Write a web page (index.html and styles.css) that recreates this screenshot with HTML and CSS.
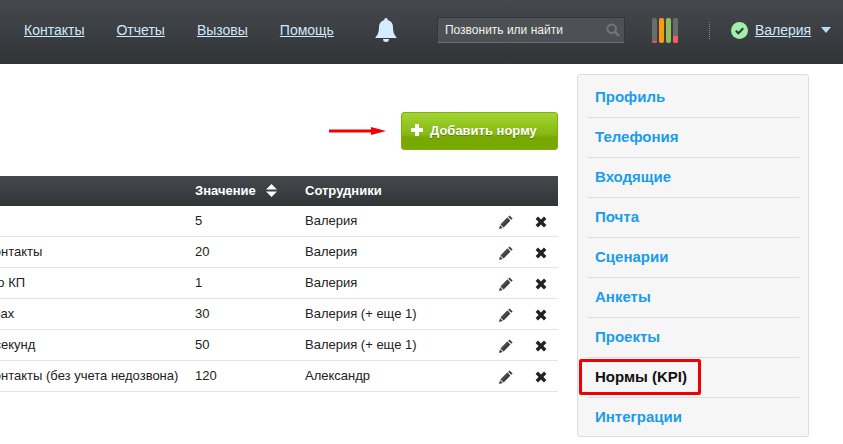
FILE: index.html
```html
<!DOCTYPE html>
<html lang="ru">
<head>
<meta charset="utf-8">
<title>Нормы (KPI)</title>
<link rel="stylesheet" href="styles.css">
</head>
<body>
<svg class="defs" width="0" height="0" aria-hidden="true">
  <symbol id="pencil" viewBox="0 0 14 14"><path d="M10.600.4 13.600 3.400 12.200 4.800 9.200 1.800ZM8.400 2.600 11.400 5.600 4.600 12.400 1.600 9.400ZM1 10.200 3.800 13 0 14Z" fill="#2f3f52"/><path d="M8.400 2.600 9.900 4.100 3.100 10.900 1.600 9.400Z" fill="#5a4a34"/></symbol>
  <symbol id="cross" viewBox="0 0 12 12"><path d="M3 .6 6 3.600 9 .6 11.400 3 8.400 6 11.400 9 9 11.400 6 8.400 3 11.400.6 9 3.600 6 .6 3Z" fill="#222"/></symbol>
</svg>
<header class="topbar">
  <nav class="nav">
    <a href="#">Контакты</a>
    <a href="#">Отчеты</a>
    <a href="#">Вызовы</a>
    <a href="#">Помощь</a>
  </nav>
  <svg class="bell" viewBox="0 0 22 24" aria-hidden="true"><path d="M11 0a1.700 1.700 0 0 1 1.700 1.900C16 2.700 18 5.300 18 9c0 6 1.500 8 4 11H0c2.500-3 4-5 4-11 0-3.700 2-6.300 5.300-7.100A1.700 1.700 0 0 1 11 0ZM8 21h6a3 3 0 0 1-6 0Z" fill="#d3ecff"/></svg>
  <div class="search">
    <span>Позвонить или найти</span>
    <svg viewBox="0 0 14 14" aria-hidden="true"><circle cx="5.700" cy="5.700" r="4.300" fill="none" stroke="#74767a" stroke-width="2"/><path d="M9 9l4 4" stroke="#74767a" stroke-width="2.400"/></svg>
  </div>
  <div class="meters">
    <i class="meter"><b class="fill-low"></b></i>
    <i class="meter"><b class="fill-orange"></b></i>
    <i class="meter"><b class="fill-green"></b></i>
    <i class="meter"><b class="fill-mid"></b></i>
  </div>
  <div class="dots"></div>
  <div class="user">
    <svg class="status" viewBox="0 0 17 17" aria-hidden="true"><circle cx="8.500" cy="8.500" r="8.500" fill="#a2efab"/><path d="M4.800 8.800 7.400 11.300 12.200 6.300" fill="none" stroke="#2f3a36" stroke-width="2"/></svg>
    <a href="#">Валерия</a>
    <span class="caret"></span>
  </div>
</header>
<div class="page">
  <main class="content">
    <div class="toolbar">
      <svg class="arrow" viewBox="0 0 57 8" aria-hidden="true"><path d="M0 2.500h42V0l15 4-15 4V5.500H0Z" fill="#f00000"/></svg>
      <a class="add" href="#"><svg viewBox="0 0 14 14" aria-hidden="true"><path d="M5 1h4v4h4v4H9v4H5V9H1V5h4Z" fill="#fff"/></svg>Добавить норму</a>
    </div>
    <table class="grid">
      <colgroup><col class="c-name"><col class="c-val"><col class="c-staff"><col class="c-edit"><col class="c-del"></colgroup>
      <thead>
        <tr><th>Название</th><th>Значение<svg class="sort" viewBox="0 0 11 13" aria-hidden="true"><path d="M5.500 0 11 5.500H0ZM0 7.500H11L5.500 13Z" fill="#fff"/></svg></th><th>Сотрудники</th><th></th><th></th></tr>
      </thead>
      <tbody>
        <tr><td>Новые лиды</td><td>5</td><td>Валерия</td><td><svg class="ico"><use href="#pencil"/></svg></td><td><svg class="ico x"><use href="#cross"/></svg></td></tr>
        <tr><td>Обработанные контакты</td><td>20</td><td>Валерия</td><td><svg class="ico"><use href="#pencil"/></svg></td><td><svg class="ico x"><use href="#cross"/></svg></td></tr>
        <tr><td>Отправлено ТЗ по КП</td><td>1</td><td>Валерия</td><td><svg class="ico"><use href="#pencil"/></svg></td><td><svg class="ico x"><use href="#cross"/></svg></td></tr>
        <tr><td>Время в разговорах</td><td>30</td><td>Валерия (+ еще 1)</td><td><svg class="ico"><use href="#pencil"/></svg></td><td><svg class="ico x"><use href="#cross"/></svg></td></tr>
        <tr><td>Звонки свыше 5 секунд</td><td>50</td><td>Валерия (+ еще 1)</td><td><svg class="ico"><use href="#pencil"/></svg></td><td><svg class="ico x"><use href="#cross"/></svg></td></tr>
        <tr><td>Обработанные контакты (без учета недозвона)</td><td>120</td><td>Александр</td><td><svg class="ico"><use href="#pencil"/></svg></td><td><svg class="ico x"><use href="#cross"/></svg></td></tr>
      </tbody>
    </table>
  </main>
  <aside class="side">
    <a href="#">Профиль</a>
    <a href="#">Телефония</a>
    <a href="#">Входящие</a>
    <a href="#">Почта</a>
    <a href="#">Сценарии</a>
    <a href="#">Анкеты</a>
    <a href="#">Проекты</a>
    <a href="#" class="current">Нормы (KPI)</a>
    <a href="#">Интеграции</a>
    <div class="mark"></div>
  </aside>
</div>
</body>
</html>
```
FILE: styles.css
```css
* { box-sizing: border-box; }
html, body { margin: 0; height: 100%; overflow: hidden; background: #fff; }
body { font-family: "Liberation Sans", Arial, sans-serif; font-size: 13px; color: #222; }
.defs { display: block; height: 0; }

.topbar { height: 64px; padding: 0 11px 4px 24px; display: flex; align-items: center; background: linear-gradient(#45494d, #313437); }
.nav { display: flex; gap: 32px; }
.topbar a { color: #cde9ff; font-size: 14px; text-decoration: underline; }
.bell { width: 22px; height: 24px; margin-left: 41px; }
.search { width: 188px; height: 26px; margin-left: 40px; padding: 0 4px 0 7px; display: flex; align-items: center; justify-content: space-between; background: #4d5155; border: 1px solid #33363a; border-bottom-color: #6a6d70; color: #f3f3ea; font-size: 12px; }
.search svg { width: 14px; height: 14px; }
.meters { display: flex; gap: 2px; margin-left: 27px; }
.meter { width: 5px; height: 25px; border-radius: 2px; background: #6c6c6c; display: flex; align-items: flex-end; overflow: hidden; }
.meter b { display: block; width: 100%; }
.fill-low { height: 2px; background: #f45050; }
.fill-orange { height: 100%; background: #f89c0e; }
.fill-green { height: 100%; background: #8fbe5a; }
.fill-mid { height: 7px; background: #f75c64; }
.dots { height: 17px; margin-left: 31px; border-left: 1px dotted #8a8d90; }
.user { margin-left: 21px; display: flex; align-items: center; }
.status { width: 17px; height: 17px; margin-right: 7px; }
.caret { width: 0; height: 0; margin-left: 10px; border: 5.5px solid transparent; border-top: 6px solid #b7def8; border-bottom: 0; }

.page { display: flex; align-items: flex-start; gap: 19px; padding-top: 10px; }
.content { width: 558px; flex: none; }
.toolbar { height: 38px; margin-top: 38px; display: flex; justify-content: flex-end; align-items: center; gap: 15px; }
.arrow { width: 57px; height: 8px; }
.add { width: 157px; height: 38px; padding: 0 0 2px 8px; display: flex; align-items: center; gap: 6px; border-radius: 3px; border: 1px solid #7fb012; background: linear-gradient(#a3d435, #86b910 60%, #77a900 68%); color: #fff; font-size: 13px; font-weight: bold; text-decoration: none; text-shadow: 0 1px 1px rgba(60, 80, 0, .6); }
.add svg { width: 14px; height: 14px; }

.grid { width: 664px; margin: 26px 0 0 -106px; table-layout: fixed; border-collapse: separate; border-spacing: 0; }
.c-name { width: 301px; }
.c-val { width: 110px; }
.c-staff { width: 185px; }
.c-edit { width: 36px; }
.c-del { width: 32px; }
.grid th { height: 30px; padding: 0 0 1px; text-align: left; color: #fff; font-weight: bold; background: linear-gradient(#45494d, #313437); white-space: nowrap; }
.grid td { height: 31px; padding: 0 0 2px; border-bottom: 1px solid #e3e3e3; white-space: nowrap; overflow: hidden; }
.sort { width: 11px; height: 13px; margin-left: 10px; vertical-align: -2px; }
.ico { display: block; width: 14px; height: 14px; margin: 4px 0 0 9px; }
.ico.x { width: 12px; height: 12px; margin-left: 9px; }

.side { position: relative; width: 232px; flex: none; padding: 3px 9px 0; background: #f6f6f6; border: 1px solid #ddd; border-radius: 3px; display: flex; flex-direction: column; }
.side a { height: 40px; padding: 0 8px 3px; display: flex; align-items: center; border-bottom: 1px solid #ddd; color: #1a9cec; font-size: 15px; font-weight: bold; text-decoration: none; }
.side a:nth-last-of-type(1) { height: 38px; padding-bottom: 1px; border-bottom: 0; }
.side .current { color: #111; }
.mark { position: absolute; left: 1px; top: 284px; width: 122px; height: 36px; border: 3px solid #f00000; border-radius: 2px; }
```
